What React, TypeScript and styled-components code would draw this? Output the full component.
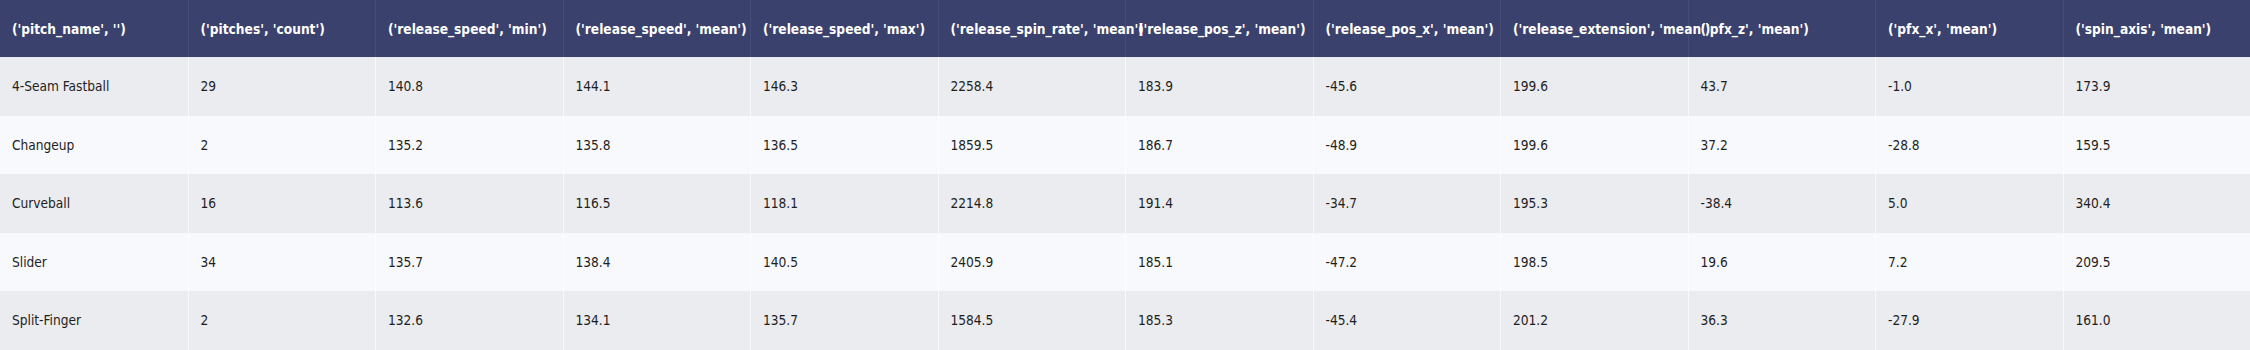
import React, { FC } from "react";
import styled, { createGlobalStyle } from "styled-components";

const GlobalStyle = createGlobalStyle`
  html, body {
    margin: 0;
    padding: 0;
    background: #f8f9fc;
  }
  body {
    font-family: "DejaVu Sans Condensed", "DejaVu Sans", Verdana, sans-serif;
    font-stretch: condensed;
  }
`;

const headers = [
  "('pitch_name', '')",
  "('pitches', 'count')",
  "('release_speed', 'min')",
  "('release_speed', 'mean')",
  "('release_speed', 'max')",
  "('release_spin_rate', 'mean')",
  "('release_pos_z', 'mean')",
  "('release_pos_x', 'mean')",
  "('release_extension', 'mean')",
  "('pfx_z', 'mean')",
  "('pfx_x', 'mean')",
  "('spin_axis', 'mean')",
];

const rows: string[][] = [
  ["4-Seam Fastball", "29", "140.8", "144.1", "146.3", "2258.4", "183.9", "-45.6", "199.6", "43.7", "-1.0", "173.9"],
  ["Changeup", "2", "135.2", "135.8", "136.5", "1859.5", "186.7", "-48.9", "199.6", "37.2", "-28.8", "159.5"],
  ["Curveball", "16", "113.6", "116.5", "118.1", "2214.8", "191.4", "-34.7", "195.3", "-38.4", "5.0", "340.4"],
  ["Slider", "34", "135.7", "138.4", "140.5", "2405.9", "185.1", "-47.2", "198.5", "19.6", "7.2", "209.5"],
  ["Split-Finger", "2", "132.6", "134.1", "135.7", "1584.5", "185.3", "-45.4", "201.2", "36.3", "-27.9", "161.0"],
];

const App: FC = () => {
  return (
    <>
      <GlobalStyle />
      <Table>
        <HeadRow>
          {headers.map((h) => (
            <HeadCell key={h}>{h}</HeadCell>
          ))}
        </HeadRow>
        {rows.map((row, i) => (
          <BodyRow key={row[0]} odd={i % 2 === 0}>
            {row.map((value, j) => (
              <BodyCell key={j}>{value}</BodyCell>
            ))}
          </BodyRow>
        ))}
      </Table>
    </>
  );
};

const Table = styled.div`
  width: 2250px;
  display: flex;
  flex-direction: column;
`;

const HeadRow = styled.div`
  display: grid;
  grid-template-columns: repeat(12, 1fr);
  height: 57px;
  background: #3b416d;
`;

const BodyRow = styled.div<{ odd: boolean }>`
  display: grid;
  grid-template-columns: repeat(12, 1fr);
  height: 58.5px;
  background: ${(p) => (p.odd ? "#ebecf0" : "#f8f9fc")};
`;

const Cell = styled.div`
  display: flex;
  align-items: center;
  padding: 0 12px;
  white-space: nowrap;
  overflow: visible;
  font-size: 13.6px;
  min-width: 0;

  & + & {
    border-left: 1px solid transparent;
  }
`;

const HeadCell = styled(Cell)`
  color: #ffffff;
  font-weight: bold;

  & + & {
    border-left-color: rgba(255, 255, 255, 0.06);
  }
`;

const BodyCell = styled(Cell)`
  color: #1e1e1e;

  & + & {
    border-left-color: rgba(255, 255, 255, 0.7);
  }
`;

export default App;
